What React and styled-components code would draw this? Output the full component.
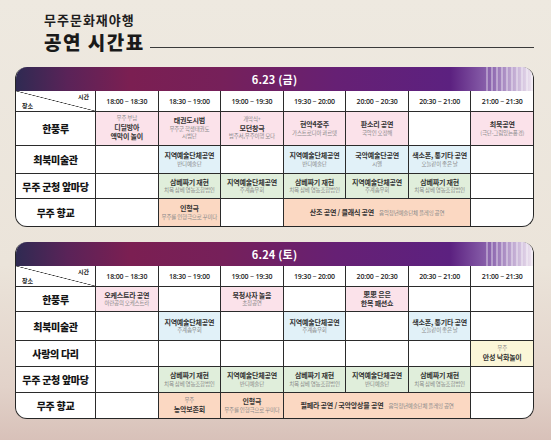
import React from 'react';
import styled, { createGlobalStyle } from 'styled-components';

const GlobalStyle = createGlobalStyle`
  html, body {
    margin: 0;
    padding: 0;
  }
  body {
    width: 551px;
    height: 440px;
    overflow: hidden;
    font-family: "Noto Sans CJK KR", "Noto Sans", sans-serif;
    background: linear-gradient(180deg, #eee9e0 0%, #ebe4da 60%, #e2d2c9 88%, #d8c1b9 100%);
    color: #222;
  }
`;

const TONES = {
  pink: '#fbe2ea',
  blue: '#e1f1f8',
  green: '#e0eedb',
  peach: '#fbd8c2',
  yellow: '#fbf6d8',
};

const TIMES = [
  '18:00 ~ 18:30', '18:30 ~ 19:00', '19:00 ~ 19:30', '19:30 ~ 20:00',
  '20:00 ~ 20:30', '20:30 ~ 21:00', '21:00 ~ 21:30',
];

const samb = { tone: 'green', title: '삼베짜기 재현', sub: '치목 삼베 영농조합법인' };

const days = [
  {
    date: '6.23 (금)',
    rows: [
      {
        venue: '한풍루', h: 33,
        cells: [
          { tone: 'pink', top: '무주 부남', title: '디딜방아\n액막이 놀이' },
          { tone: 'pink', title: '태권도시범', sub: '무주군 학생태권도\n시범단' },
          { tone: 'pink', top: '개막식+', title: '모던창극', sub: '범주서,무주이행 모다' },
          { tone: 'pink', title: '현악4중주', sub: '가스트로디아 콰르텟' },
          { tone: 'pink', title: '판소리 공연', sub: '국악인 오정해' },
          null,
          { tone: 'pink', title: '최북공연', sub: '(극단-그림있는풍경)' },
        ],
      },
      {
        venue: '최북미술관', h: 27,
        cells: [
          null,
          { tone: 'blue', title: '지역예술단체공연', sub: '반디예술단' },
          null,
          { tone: 'blue', title: '지역예술단체공연', sub: '반디예술단' },
          { tone: 'blue', title: '국악예술단공연', sub: '시엘' },
          { tone: 'blue', title: '색소폰, 통기타 공연', sub: '오늘같이 좋은 날' },
          null,
        ],
      },
      {
        venue: '무주 군청 앞마당', h: 24,
        cells: [
          null,
          samb,
          { tone: 'green', title: '지역예술단체공연', sub: '주계솜우회' },
          samb,
          { tone: 'green', title: '지역예술단체공연', sub: '주계솜우회' },
          samb,
          null,
        ],
      },
      {
        venue: '무주 향교', h: 27,
        cells: [
          null,
          { tone: 'peach', title: '인형극', sub: '무주를 인형극으로 꾸미다' },
          null,
          { tone: 'peach', span: 3, title: '산조 공연 / 클래식 공연', sub: '음악청년예술단체 플레잉 공연' },
          null,
        ],
      },
    ],
  },
  {
    date: '6.24 (토)',
    rows: [
      {
        venue: '한풍루', h: 24,
        cells: [
          { tone: 'pink', title: '오케스트라 공연', sub: '아란공의 오케스트라' },
          null,
          { tone: 'pink', title: '북청사자 놀음', sub: '초청공연' },
          null,
          { tone: 'pink', title: '恩恩 은은\n한복 패션쇼' },
          null,
          null,
        ],
      },
      {
        venue: '최북미술관', h: 28,
        cells: [
          null,
          { tone: 'blue', title: '지역예술단체공연', sub: '주계솜우회' },
          null,
          { tone: 'blue', title: '지역예술단체공연', sub: '주계솜우회' },
          null,
          { tone: 'blue', title: '색소폰, 통기타 공연', sub: '오늘같이 좋은 날' },
          null,
        ],
      },
      {
        venue: '사랑의 다리', h: 25,
        cells: [
          null, null, null, null, null, null,
          { tone: 'yellow', top: '무주', title: '안성 낙화놀이' },
        ],
      },
      {
        venue: '무주 군청 앞마당', h: 25,
        cells: [
          null,
          samb,
          { tone: 'green', title: '지역예술단체공연', sub: '반디예술단' },
          samb,
          { tone: 'green', title: '지역예술단체공연', sub: '반디예술단' },
          samb,
          null,
        ],
      },
      {
        venue: '무주 향교', h: 25,
        cells: [
          null,
          { tone: 'peach', top: '무주', title: '농악보존회' },
          { tone: 'peach', title: '인형극', sub: '무주를 인형극으로 꾸미다' },
          { tone: 'peach', span: 3, title: '필페라 공연 / 국악앙상블 공연', sub: '음악청년예술단체 플레잉 공연' },
          null,
        ],
      },
    ],
  },
];

export default function App() {
  return (
    <Page>
      <GlobalStyle />
      <Heading>
        <Kicker>무주문화재야행</Kicker>
        <TitleLine>
          <Title>공연 시간표</Title>
          <Rule />
        </TitleLine>
      </Heading>
      {days.map(day => (
        <Card key={day.date}>
          <DateBar>{day.date}</DateBar>
          <Grid rows={[20, ...day.rows.map(r => r.h)]}>
            <Corner>
              <CornerLabel corner="time">시간</CornerLabel>
              <CornerLabel corner="place">장소</CornerLabel>
            </Corner>
            {TIMES.map(t => <TimeCell key={t}>{t}</TimeCell>)}
            {day.rows.map(row => (
              <React.Fragment key={row.venue}>
                <Venue>{row.venue}</Venue>
                {row.cells.map((cell, i) =>
                  cell ? (
                    <Slot key={i} tone={cell.tone} span={cell.span}>
                      {cell.span ? (
                        <Inline>
                          <ShowTitle>{cell.title}</ShowTitle>
                          <Sub>{cell.sub}</Sub>
                        </Inline>
                      ) : (
                        <>
                          {cell.top && <Sub>{cell.top}</Sub>}
                          <ShowTitle>{cell.title}</ShowTitle>
                          {cell.sub && <Sub>{cell.sub}</Sub>}
                        </>
                      )}
                    </Slot>
                  ) : (
                    <Slot key={i} />
                  )
                )}
              </React.Fragment>
            ))}
          </Grid>
        </Card>
      ))}
    </Page>
  );
}

const Page = styled.div`
  display: flex;
  flex-direction: column;
  gap: 15px;
  padding: 11px 17px 0 15px;
`;

const Heading = styled.header`
  display: flex;
  flex-direction: column;
  gap: 3px;
  padding-left: 29px;
`;

const Kicker = styled.div`
  font-size: 13px;
  font-weight: 700;
  line-height: 17px;
  letter-spacing: 1px;
  color: #1e1e1e;
`;

const TitleLine = styled.div`
  display: flex;
  align-items: flex-end;
  gap: 5px;
`;

const Title = styled.div`
  font-size: 19px;
  font-weight: 900;
  line-height: 21px;
  letter-spacing: 1.5px;
  color: #1a1a1a;
`;

const Rule = styled.div`
  flex: 1;
  height: 1px;
  background: #3a3a3a;
  margin-bottom: 4px;
`;

const Card = styled.section`
  border: 1.5px solid #262626;
  border-top: none;
  border-radius: 12px;
  overflow: hidden;
  background: #fff;
`;

const DateBar = styled.div`
  height: 24px;
  display: flex;
  align-items: center;
  justify-content: center;
  color: #fff;
  font-size: 11px;
  font-weight: 700;
  letter-spacing: 0.2px;
  background:
    repeating-linear-gradient(90deg, transparent 0 3px, rgba(255, 255, 255, 0.35) 3px 5px) right / 50px 100% no-repeat,
    linear-gradient(90deg, #2f2a52 0%, #5a2358 10%, #7b1f52 22%, #76205a 40%, #662074 62%, #5c2180 84%, #8e68b0 92%, #efe6f1 100%);
`;

const Grid = styled.div`
  display: grid;
  grid-template-columns: 79px repeat(7, 1fr);
  grid-template-rows: ${p => p.rows.map(r => `${r}px`).join(' ')};
  gap: 1px;
  background: #2b2b2b;
`;

const Corner = styled.div`
  position: relative;
  background: linear-gradient(to bottom left, #fff calc(50% - 0.6px), #333 50%, #fff calc(50% + 0.6px));
`;

const CornerLabel = styled.span`
  position: absolute;
  font-size: 6px;
  line-height: 7px;
  font-weight: 700;
  color: #222;
  ${p => (p.corner === 'time' ? 'top: 2px; right: 6px;' : 'bottom: 2px; left: 6px;')}
`;

const TimeCell = styled.div`
  background: #fff;
  display: flex;
  align-items: center;
  justify-content: center;
  font-family: "Open Sans", "Noto Sans", sans-serif;
  font-size: 7px;
  font-weight: 600;
  color: #222;
  letter-spacing: -0.2px;
`;

const Venue = styled.div`
  background: #fff;
  display: flex;
  align-items: center;
  justify-content: center;
  font-size: 10px;
  font-weight: 900;
  letter-spacing: -0.3px;
  color: #151515;
`;

const Slot = styled.div`
  background: ${p => (p.tone ? TONES[p.tone] : '#fff')};
  grid-column: ${p => (p.span ? `span ${p.span}` : 'auto')};
  display: flex;
  flex-direction: column;
  align-items: center;
  justify-content: center;
  text-align: center;
  overflow: hidden;
`;

const Inline = styled.div`
  display: flex;
  align-items: baseline;
  gap: 5px;
`;

const ShowTitle = styled.div`
  font-size: 7px;
  line-height: 9.5px;
  font-weight: 700;
  color: #333;
  white-space: pre-line;
  letter-spacing: -0.2px;
`;

const Sub = styled.div`
  font-size: 5.5px;
  line-height: 7.5px;
  color: #8a8a8a;
  white-space: pre-line;
  letter-spacing: -0.2px;
`;
